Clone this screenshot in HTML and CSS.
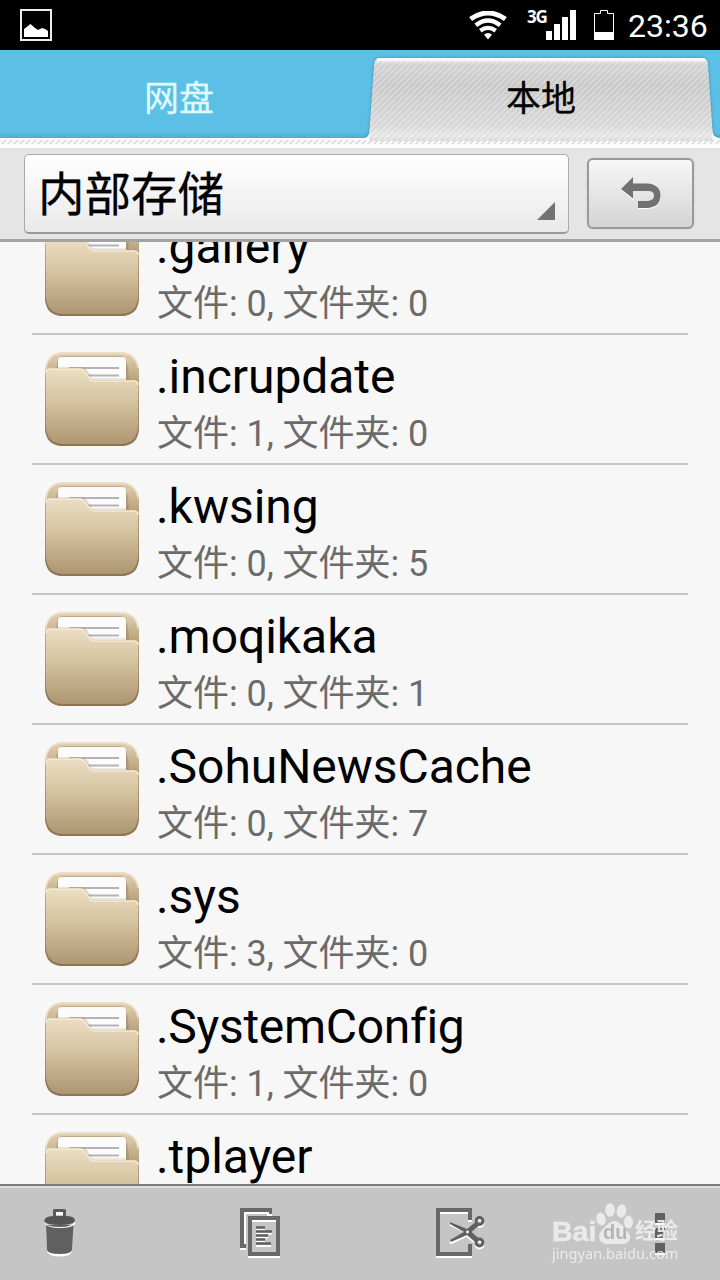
FILE: index.html
```html
<!DOCTYPE html>
<html lang="zh-CN">
<head>
<meta charset="utf-8">
<title>网盘 - 本地</title>
<link rel="stylesheet" href="styles.css">
</head>
<body>
<svg class="defs" width="0" height="0">
  <defs>
    <linearGradient id="gBack" x1="0" y1="0" x2="0" y2="1"><stop offset="0" stop-color="#e3d2b4"/><stop offset=".3" stop-color="#b9a27c"/><stop offset="1" stop-color="#a8906c"/></linearGradient>
    <linearGradient id="gFront" x1="0" y1="0" x2="0" y2="1"><stop offset="0" stop-color="#ecdec3"/><stop offset=".4" stop-color="#d7c5a3"/><stop offset="1" stop-color="#ae9672"/></linearGradient>
    <linearGradient id="gShade" x1="0" y1="0" x2="0" y2="1"><stop offset="0" stop-color="#c5ae88"/><stop offset="1" stop-color="#8d7554"/></linearGradient>
    <symbol id="folder" viewBox="0 0 96 96">
      <rect x="1" y="1" width="94" height="94" rx="18" fill="url(#gBack)"/>
      <path d="M2 21V17Q4 2 19 2H77Q92 2 94 17" fill="none" stroke="#efe3cc" stroke-width="1.500"/>
      <path d="M12 25Q12 5 19 5H77Q85 6 85 34H70Z" fill="#8f7956" opacity=".4"/>
      <rect x="14" y="6" width="68" height="40" rx="4" fill="#fcfbfb"/>
      <path d="M25 17H75M29 24.500H75" stroke="#b4b4b8" stroke-width="2"/>
      <path d="M14 25V16H38Q43 16 48 27H82V31H40Z" fill="#66584a" opacity=".13"/>
      <path d="M1 21Q1 17 6 17H36Q40 17 42 20L46 27Q48 29 51 29H90Q95 29 95 34V76Q95 95 77 95H19Q1 95 1 76Z" fill="url(#gShade)"/>
      <path d="M2 22Q2 18 6 18H36Q39 18 41 21L46 28Q48 30 51 30H90Q94 30 94 34V75Q93 93 76 93H20Q3 93 2 75Z" fill="url(#gFront)"/>
      <path d="M2 22Q2 18 6 18H36Q39 18 41 21L46 28Q48 30 51 30H90Q94 30 94 34" fill="none" stroke="#f6ebd6" stroke-width="1.500"/>
    </symbol>
  </defs>
</svg>
<div class="screen">
  <header class="status">
    <svg class="picture" width="32" height="32" viewBox="0 0 32 32"><rect x="1" y="1" width="30" height="30" fill="none" stroke="#eee" stroke-width="2"/><path d="M4 28V20L8 17L10.500 15L15 19L18 21L22 19L25 20L28 22V28Z" fill="#fff"/></svg>
    <svg class="wifi" width="38" height="29" viewBox="0 0 38 29" fill="none" stroke="#fff"><path d="M19 28.500L15 23.500Q19 20.500 23 23.500Z" fill="#fff" stroke="none"/><path d="M11.300 19.800Q19 14 26.700 19.800" stroke-width="4.200"/><path d="M6.800 14.200Q19 4.700 31.200 14.200" stroke-width="4.400"/><path d="M1.600 8Q19-4 36.400 8" stroke-width="5"/></svg>
    <span class="net">3G</span>
    <svg class="signal" width="30" height="30" viewBox="0 0 30 30" fill="#fff"><path d="M0 21h6v9H0zM8 14h6v16H8zM16 7h6v23h-6zM24 0h6v30h-6z"/></svg>
    <svg class="battery" width="20" height="30" viewBox="0 0 20 30"><path d="M.5 29.500V3.500H6.500V.5H13.500V3.500H19.500V29.500Z" fill="none" stroke="#fff"/><path d="M0 22h20v8H0z" fill="#fff"/></svg>
    <span class="clock">23:36</span>
  </header>

  <nav class="tabs">
    <svg class="tab-shape" width="720" height="98" viewBox="0 0 720 98">
      <defs>
        <linearGradient id="gTab" x1="0" y1="0" x2="0" y2="1"><stop offset="0" stop-color="#fff"/><stop offset=".07" stop-color="#d0d0d0"/><stop offset=".35" stop-color="#c8c8c8"/><stop offset=".8" stop-color="#d8d8d8"/><stop offset="1" stop-color="#f0f0f0"/></linearGradient>
        <pattern id="hatch" width="6" height="6" patternUnits="userSpaceOnUse"><path d="M-1 7L7-1M-1 1L1-1M5 7L7 5" stroke="#fff" stroke-opacity=".3" stroke-width="1.700"/></pattern>
        <pattern id="hatchStrip" width="6" height="6" patternUnits="userSpaceOnUse"><path d="M-1 7L7-1M-1 1L1-1M5 7L7 5" stroke="#d5d5d5" stroke-width="1.800"/></pattern>
        <linearGradient id="gBlueEdge" x1="0" y1="0" x2="0" y2="1"><stop offset="0" stop-color="#3792b4" stop-opacity="0"/><stop offset="1" stop-color="#3792b4" stop-opacity=".4"/></linearGradient>
      </defs>
      <rect y="82" width="720" height="6" fill="url(#gBlueEdge)"/>
      <path class="tab-edge" d="M364 88Q369 88 369.500 80L374 15Q374 8 381 8H702Q708 8 708 15L712.500 80Q713 88 720 88V94H364Z" fill="url(#gTab)"/>
      <path d="M365 88Q369 88 369.500 80L374 15Q374 10 381 10H702Q708 10 708 15L712.500 80Q713 88 720 88H365Z" fill="url(#hatch)"/>
      <path d="M377 9.500H705" stroke="#fafafa" stroke-width="2.500"/>
      <path d="M0 88H364Q369 88 369.500 82V88H712.500V82Q713 88 720 88V98H0Z" fill="#fcfcfc"/>
      <path d="M369.500 87H712.500V91H369.500Z" fill="#dedede"/>
      <path d="M369.500 87H712.500V91H369.500Z" fill="url(#hatch)"/>
      <rect y="90" width="720" height="4" fill="url(#hatchStrip)" opacity=".8"/>
    </svg>
    <span class="tab tab-cloud">网盘</span>
    <span class="tab tab-local">本地</span>
  </nav>

  <section class="pathbar">
    <div class="select">内部存储<svg class="corner" width="18" height="18" viewBox="0 0 18 18"><path d="M18 0V18H0Z" fill="#737373"/></svg></div>
    <div class="back"><svg width="40" height="32" viewBox="0 0 40 32"><path d="M0 12L12 0V7H27Q40 8 40 18.500Q39 30 27 31H17V25H27Q33 24 33 18.500Q33 13 27 13H12V22Z" fill="#fff" transform="translate(0 1)"/><path d="M0 12L12 0V6.500H27Q39.500 8 39.500 18.500Q39 30 27 31H17V24H27Q33 23 33 18.500Q33 14 27 14H12V21.500Z" fill="#717171"/></svg></div>
  </section>

  <main class="list">
    <div class="row"><svg class="folder"><use href="#folder"/></svg><div class="info"><div class="name">.gallery</div><div class="meta">文件: 0, 文件夹: 0</div></div></div>
    <div class="row"><svg class="folder"><use href="#folder"/></svg><div class="info"><div class="name">.incrupdate</div><div class="meta">文件: 1, 文件夹: 0</div></div></div>
    <div class="row"><svg class="folder"><use href="#folder"/></svg><div class="info"><div class="name">.kwsing</div><div class="meta">文件: 0, 文件夹: 5</div></div></div>
    <div class="row"><svg class="folder"><use href="#folder"/></svg><div class="info"><div class="name">.moqikaka</div><div class="meta">文件: 0, 文件夹: 1</div></div></div>
    <div class="row"><svg class="folder"><use href="#folder"/></svg><div class="info"><div class="name">.SohuNewsCache</div><div class="meta">文件: 0, 文件夹: 7</div></div></div>
    <div class="row"><svg class="folder"><use href="#folder"/></svg><div class="info"><div class="name">.sys</div><div class="meta">文件: 3, 文件夹: 0</div></div></div>
    <div class="row"><svg class="folder"><use href="#folder"/></svg><div class="info"><div class="name tight">.SystemConfig</div><div class="meta">文件: 1, 文件夹: 0</div></div></div>
    <div class="row"><svg class="folder"><use href="#folder"/></svg><div class="info"><div class="name">.tplayer</div></div></div>
  </main>

  <footer class="actions">
    <svg class="icon trash" width="32" height="50" viewBox="0 0 32 50"><path d="M10.500 8V2.500H20.500V8" fill="none" stroke="#5a5a5a" stroke-width="3" stroke-linejoin="round"/><path d="M12 5.500H19" stroke="#fff" stroke-width="3"/><path d="M3 43Q4 48.500 16 48.500Q27 48.500 28 43L29 18H2Z" fill="#fff"/><path d="M2 17L3 42Q4 46 16 46Q27 46 28 42L29.500 17Z" fill="#606060"/><path d="M0 14Q2 19 16 19Q29 19 31 13V16Q28 20 16 20Q3 20 0 15Z" fill="#fff"/><path d="M0 13Q1 8 10 8H22Q31 8 31 13Q29 17 16 17Q2 17 0 13Z" fill="#555"/></svg>
    <svg class="icon copy" width="42" height="52" viewBox="0 0 42 52"><path d="M0 0H32V6H28V4H4V36H6V40H0Z" fill="#686868"/><path d="M0 41H6M5 36V5H28V7H32" fill="none" stroke="#fff" stroke-width="2"/><path d="M8 49H40" stroke="#fff" stroke-width="2"/><path d="M8 8H40V48H8Z" fill="#686868"/><path d="M12 12H36V44H12Z" fill="#c5c5c5"/><path d="M12 13H36" stroke="#fff" stroke-width="2"/><path d="M16 21.500H25M16 25.500H32M16 29.500H28M16 33.500H25M16 38H31" stroke="#fff" stroke-width="2"/><path d="M16 19.500H25M16 23.500H32M16 27.500H28M16 31.500H25M16 35.500H31" stroke="#606060" stroke-width="2.500"/></svg>
    <svg class="icon cut" width="50" height="52" viewBox="0 0 50 52"><path d="M0 49H36" stroke="#fff" stroke-width="2"/><path d="M0 0H36V12H32V4H4V44H32V36H36V48H0Z" fill="#686868"/><path d="M4 5H32M32 13H36" stroke="#fff" stroke-width="2"/><g transform="translate(0 2)" fill="none" stroke="#fff"><path d="M14 14L31 22L39 17M14 33L31 25L39 32" stroke-width="3.500"/><circle cx="43.500" cy="13" r="3.500" stroke-width="3"/><circle cx="43.500" cy="34.500" r="3.500" stroke-width="3"/></g><path d="M14 14L31 21L39 14.500L43 17.500L35.500 24L43 30.500L39 34L31 27L15 34L14 32L28 24L14 16Z" fill="#606060"/><g fill="none" stroke="#606060" stroke-width="3"><circle cx="43.500" cy="13" r="3.400"/><circle cx="43.500" cy="34.500" r="3.400"/></g><circle cx="31.500" cy="24" r="1.400" fill="#fff"/></svg>
    <svg class="icon menu" width="10" height="44" viewBox="0 0 10 44"><path d="M0 2H10V12H0ZM0 17H10V27H0ZM0 32H10V42H0Z" fill="#fff"/><path d="M0 0H10V10H0ZM0 15H10V25H0ZM0 30H10V40H0Z" fill="#606060"/></svg>
    <div class="watermark">
      <div class="brand"><span class="bai">Bai</span><svg class="paw" width="38" height="42" viewBox="0 0 38 42" fill="#eee"><ellipse cx="5" cy="16" rx="4.600" ry="6.500" transform="rotate(-10 5 16)"/><ellipse cx="14" cy="7" rx="4.800" ry="6.700"/><ellipse cx="25.500" cy="8" rx="4.800" ry="6.700" transform="rotate(10 25.500 8)"/><ellipse cx="32.500" cy="19" rx="4.500" ry="6.500"/><path d="M18.500 18C14 18 11 22 7 26Q2 31 3.500 36Q6 42 13 41H24Q32 42 34 36Q35 31 30 27C26 22 23 18 18.500 18Z"/></svg><span class="du">du</span><span class="jy">经验</span></div>
      <span class="url">jingyan.baidu.com</span>
    </div>
  </footer>
</div>
</body>
</html>
```
FILE: styles.css
```css
* { box-sizing: border-box; }
body { margin: 0; background: #f7f7f7; font-family: Roboto, "Noto Sans CJK SC", sans-serif; color: #000; }
.defs { position: absolute; }
.screen { width: 720px; height: 1280px; display: flex; flex-direction: column; overflow: hidden; }
svg { display: block; flex: none; }

.status { height: 50px; flex: none; background: #000; display: flex; align-items: flex-start; color: #fff; padding-left: 20px; }
.picture { margin-top: 9px; }
.wifi { margin: 11px 0 0 417px; }
.net { width: 20px; margin: 7px 0 0 20px; font: bold 17px/20px "Noto Sans", sans-serif; letter-spacing: -1.200px; white-space: nowrap; }
.signal { margin: 10px 0 0 -1px; }
.battery { margin: 10px 0 0 18px; }
.clock { margin: 6px 0 0 14px; font-size: 32px; line-height: 40px; }

.tabs { height: 98px; flex: none; background: #5bbfe6; position: relative; display: flex; }
.tab-shape { position: absolute; left: 0; top: 0; }
.tab-edge { filter: drop-shadow(0 0 1.500px rgba(20, 80, 110, .45)); }
.tab { position: relative; width: 360px; height: 98px; font-size: 35px; line-height: 100px; text-align: center; -webkit-text-stroke: .3px currentColor; }
.tab-cloud { color: #dffaff; padding-right: 2px; }
.tab-local { padding-left: 2px; }

.pathbar { height: 94px; flex: none; background: #e5e5e5; border-bottom: 3px solid #a3a3a3; display: flex; padding: 6px 26px 0 24px; justify-content: space-between; }
.select { position: relative; width: 545px; height: 80px; border: 1px solid #aaa; border-bottom: 2px solid #999; border-radius: 5px; background: linear-gradient(#fff, #e9e9e9); font-size: 46.500px; line-height: 80px; padding-left: 13px; -webkit-text-stroke: .3px #000; }
.corner { position: absolute; right: 13px; bottom: 12px; }
.back { width: 107px; height: 71px; margin-top: 4px; border: 2px solid #999; border-radius: 6px; background: linear-gradient(#f7f7f7, #d4d4d4); box-shadow: 0 0 1px #999; padding: 17px 0 0 32px; }

.list { height: 942px; flex: none; overflow: hidden; display: flex; flex-direction: column; justify-content: flex-start; }
.row { height: 130px; flex: none; margin: 0 32px; border-bottom: 2px solid #c5c5c5; display: flex; padding: 16px 0 0 12px; }
.row:first-child { margin-top: -37px; }
.folder { width: 96px; height: 96px; }
.info { padding-left: 16px; }
.name { margin-top: -17px; height: 80px; font-size: 48px; line-height: 86px; white-space: nowrap; font-variant-ligatures: none; letter-spacing: -.05px; }
.tight { letter-spacing: -.3px; }
.meta { font-size: 36px; line-height: 40px; color: #6b6b6b; white-space: nowrap; letter-spacing: -.05px; margin-left: 1px; }

.actions { height: 96px; flex: none; background: #c5c5c5; border-top: 2px solid #7b7b7b; box-shadow: inset 0 2px #dedede; display: flex; align-items: flex-start; position: relative; }
.trash { margin: 22px 0 0 44px; }
.copy { margin: 22px 0 0 164px; }
.cut { margin: 22px 0 0 154px; }
.menu { margin: 27px 0 0 169px; }
.watermark { position: absolute; left: 552px; top: 17px; width: 130px; height: 70px; color: #eee; opacity: .92; }
.brand { display: flex; height: 43px; position: relative; }
.bai { width: 44px; margin-top: 10px; font: bold 28.500px/36px "Liberation Sans", sans-serif; -webkit-text-stroke: .4px #eee; }
.du { position: absolute; left: 51px; top: 17px; font: bold 20px/24px "Liberation Sans", sans-serif; color: #b4b4b4; }
.jy { margin: 14px 0 0 1px; font-size: 21.500px; line-height: 28px; font-weight: bold; white-space: nowrap; }
.url { display: block; margin-top: -4px; font: 14.600px/22px "Noto Sans", sans-serif; white-space: nowrap; }
```
